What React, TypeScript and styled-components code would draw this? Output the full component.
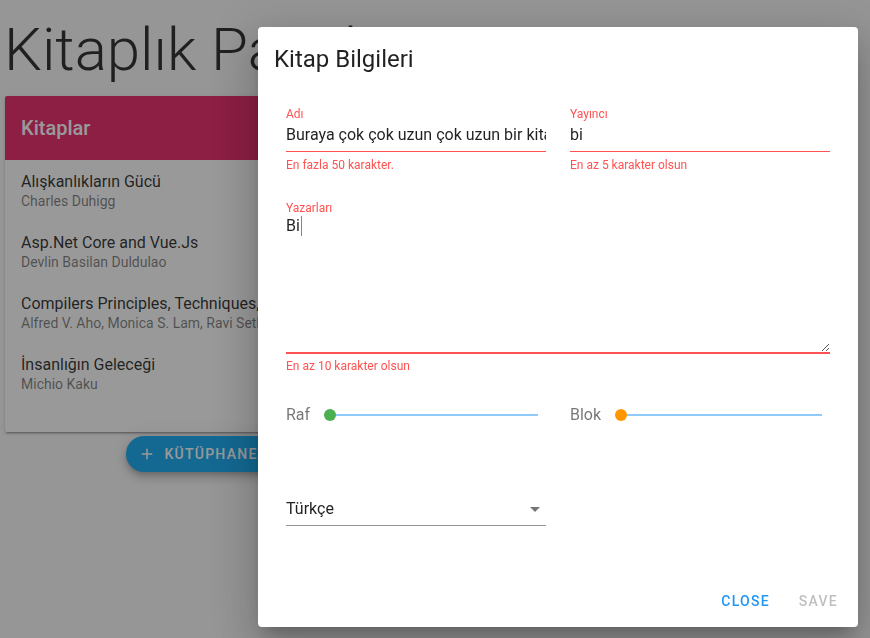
import React from "react";
import styled, { createGlobalStyle } from "styled-components";

const Global = createGlobalStyle`
  html, body { margin: 0; padding: 0; background: #fafafa; }
  body { font-family: Roboto, "Noto Sans", "Liberation Sans", sans-serif; overflow: hidden; }
  * { box-sizing: border-box; }
`;

const ERR = "#ff5252";

const Page = styled.div`
  width: 870px;
  height: 638px;
  padding: 20px 0 0 5px;
  background: #fafafa;
`;

const PageTitle = styled.h1`
  margin: 0 0 16px -1px;
  font-size: 60px;
  font-weight: 300;
  line-height: 60px;
  color: rgba(0, 0, 0, 0.87);
  white-space: nowrap;
`;

const Column = styled.div`
  width: 432px;
  display: flex;
  flex-direction: column;
`;

const Card = styled.div`
  background: #fff;
  border-radius: 2px;
  overflow: hidden;
  box-shadow: 0 3px 1px -2px rgba(0,0,0,.2), 0 2px 2px 0 rgba(0,0,0,.14), 0 1px 5px 0 rgba(0,0,0,.12);
`;

const CardHeader = styled.div`
  height: 64px;
  padding: 0 16px;
  display: flex;
  align-items: center;
  background: #e91e63;
  color: #fff;
  font-size: 20px;
  font-weight: 500;
`;

const List = styled.div`
  padding: 0 0 28px;
`;

const Item = styled.div`
  height: 61px;
  padding: 0 16px;
  display: flex;
  flex-direction: column;
  justify-content: center;
  white-space: nowrap;
`;

const ItemTitle = styled.div`
  font-size: 16px;
  line-height: 20px;
  color: rgba(0, 0, 0, 0.87);
`;

const ItemSub = styled.div`
  font-size: 14px;
  line-height: 18px;
  color: rgba(0, 0, 0, 0.54);
`;

const ButtonRow = styled.div`
  display: flex;
  justify-content: center;
  margin-top: 4px;
`;

const PillButton = styled.button`
  height: 36px;
  border-radius: 18px;
  border: 0;
  padding: 0 16px 0 12px;
  display: flex;
  align-items: center;
  gap: 8px;
  background: #0aa6f2;
  color: #fff;
  font-family: inherit;
  font-size: 14px;
  font-weight: 500;
  letter-spacing: 1.25px;
  text-transform: uppercase;
  box-shadow: 0 3px 5px -1px rgba(0,0,0,.2), 0 6px 10px 0 rgba(0,0,0,.14), 0 1px 18px 0 rgba(0,0,0,.12);
`;

const Overlay = styled.div`
  position: fixed;
  inset: 0;
  background: rgba(33, 33, 33, 0.46);
`;

const DialogLayer = styled.div`
  position: fixed;
  inset: 0;
  display: flex;
  align-items: flex-start;
  padding: 27px 0 0 258px;
`;

const Dialog = styled.div`
  width: 600px;
  height: 600px;
  background: #fff;
  border-radius: 4px;
  display: flex;
  flex-direction: column;
  box-shadow: 0 11px 15px -7px rgba(0,0,0,.2), 0 24px 38px 3px rgba(0,0,0,.14), 0 9px 46px 8px rgba(0,0,0,.12);
`;

const DialogTitle = styled.div`
  padding: 16px;
  font-size: 24px;
  font-weight: 400;
  line-height: 32px;
  color: rgba(0, 0, 0, 0.87);
`;

const DialogBody = styled.div`
  flex: 1;
  padding: 15px 28px 0;
  display: grid;
  grid-template-columns: 260px 260px;
  column-gap: 24px;
  align-content: start;
`;

const Field = styled.div<{ $full?: boolean; $mt?: number }>`
  grid-column: ${(p) => (p.$full ? "1 / -1" : "auto")};
  margin-top: ${(p) => p.$mt ?? 0}px;
  min-width: 0;
`;

const Label = styled.div<{ $error?: boolean }>`
  font-size: 12px;
  line-height: 16px;
  color: ${(p) => (p.$error ? ERR : "rgba(0,0,0,.54)")};
`;

const InputBox = styled.div<{ $error?: boolean }>`
  padding: 3px 0 6px;
  border-bottom: 1px solid ${(p) => (p.$error ? ERR : "rgba(0,0,0,.42)")};
`;

const Input = styled.input`
  display: block;
  width: 100%;
  height: 20px;
  border: 0;
  padding: 0;
  margin: 0;
  outline: none;
  background: transparent;
  font-family: inherit;
  font-size: 16px;
  line-height: 20px;
  color: rgba(0, 0, 0, 0.87);
`;

const Message = styled.div<{ $mt: number }>`
  margin-top: ${(p) => p.$mt}px;
  font-size: 12px;
  line-height: 12px;
  color: ${ERR};
`;

const AreaBox = styled.div`
  position: relative;
  height: 138px;
  border-bottom: 2px solid ${ERR};
  font-size: 16px;
  line-height: 20px;
  color: rgba(0, 0, 0, 0.87);
`;

const Caret = styled.span`
  display: inline-block;
  width: 1px;
  height: 20px;
  margin-left: 1px;
  vertical-align: top;
  background: ${ERR};
`;

const Grip = styled.svg`
  position: absolute;
  right: 1px;
  bottom: 1px;
`;

const SliderRow = styled.div`
  grid-column: 1 / -1;
  margin-top: 27px;
  height: 32px;
  display: grid;
  grid-template-columns: 260px 260px;
  column-gap: 24px;
  align-items: center;
`;

const Slider = styled.div`
  display: flex;
  align-items: center;
`;

const SliderLabel = styled.span`
  font-size: 16px;
  line-height: 20px;
  color: rgba(0, 0, 0, 0.54);
`;

const Track = styled.div`
  position: relative;
  flex: 1;
  height: 12px;
  margin: 0 8px 0 14px;
  &::before {
    content: "";
    position: absolute;
    left: 6px;
    right: 0;
    top: 5px;
    height: 2px;
    background: #90caf9;
  }
`;

const Thumb = styled.span<{ $color: string }>`
  position: absolute;
  left: 0;
  top: 0;
  width: 12px;
  height: 12px;
  border-radius: 50%;
  background: ${(p) => p.$color};
`;

const SelectWrap = styled.div`
  grid-column: 1;
  margin-top: 68px;
`;

const SelectLine = styled.div`
  height: 20px;
  display: flex;
  align-items: center;
  justify-content: space-between;
  font-size: 16px;
  line-height: 20px;
  color: rgba(0, 0, 0, 0.87);
  & > svg { margin-right: -1px; }
`;

const SelectUnder = styled.div`
  margin-top: 6px;
  height: 1px;
  background: rgba(0, 0, 0, 0.42);
`;

const Actions = styled.div`
  display: flex;
  justify-content: flex-end;
  gap: 13px;
  padding: 8px 12px 8px;
`;

const TextButton = styled.button<{ $disabled?: boolean }>`
  height: 36px;
  border: 0;
  background: transparent;
  padding: 0 8px;
  font-family: inherit;
  font-size: 14px;
  font-weight: 500;
  letter-spacing: 1.25px;
  text-transform: uppercase;
  color: ${(p) => (p.$disabled ? "rgba(0,0,0,.26)" : "#2196f3")};
`;

const books = [
  { t: "Alışkanlıkların Gücü", a: "Charles Duhigg" },
  { t: "Asp.Net Core and Vue.Js", a: "Devlin Basilan Duldulao" },
  { t: "Compilers Principles, Techniques, and Tools", a: "Alfred V. Aho, Monica S. Lam, Ravi Sethi" },
  { t: "İnsanlığın Geleceği", a: "Michio Kaku" },
];

export default function App() {
  return (
    <>
      <Global />
      <Page>
        <PageTitle>Kitaplık Paneli</PageTitle>
        <Column>
          <Card>
            <CardHeader>Kitaplar</CardHeader>
            <List>
              {books.map((b) => (
                <Item key={b.t}>
                  <ItemTitle>{b.t}</ItemTitle>
                  <ItemSub>{b.a}</ItemSub>
                </Item>
              ))}
            </List>
          </Card>
          <ButtonRow>
            <PillButton>
              <svg width="18" height="18" viewBox="0 0 24 24">
                <path d="M19 13h-6v6h-2v-6H5v-2h6V5h2v6h6v2z" fill="currentColor" />
              </svg>
              Kütüphane Ekle
            </PillButton>
          </ButtonRow>
        </Column>
      </Page>
      <Overlay />
      <DialogLayer>
        <Dialog>
          <DialogTitle>Kitap Bilgileri</DialogTitle>
          <DialogBody>
            <Field>
              <Label $error>Adı</Label>
              <InputBox $error>
                <Input readOnly value="Buraya çok çok uzun çok uzun bir kitap adı yazıyorum" />
              </InputBox>
              <Message $mt={7}>En fazla 50 karakter.</Message>
            </Field>
            <Field>
              <Label $error>Yayıncı</Label>
              <InputBox $error>
                <Input readOnly value="bi" />
              </InputBox>
              <Message $mt={7}>En az 5 karakter olsun</Message>
            </Field>
            <Field $full $mt={29}>
              <Label $error>Yazarları</Label>
              <AreaBox>
                Bi<Caret />
                <Grip width="7" height="7" viewBox="0 0 7 7">
                  <path d="M7 0 L0 7 M7 4 L4 7" stroke="#555" strokeWidth="1" />
                </Grip>
              </AreaBox>
              <Message $mt={6}>En az 10 karakter olsun</Message>
            </Field>
            <SliderRow>
              <Slider>
                <SliderLabel>Raf</SliderLabel>
                <Track>
                  <Thumb $color="#4caf50" />
                </Track>
              </Slider>
              <Slider>
                <SliderLabel>Blok</SliderLabel>
                <Track>
                  <Thumb $color="#ff9800" />
                </Track>
              </Slider>
            </SliderRow>
            <SelectWrap>
              <SelectLine>
                Türkçe
                <svg width="24" height="24" viewBox="0 0 24 24">
                  <path d="M7 10l5 5 5-5z" fill="rgba(0,0,0,.54)" />
                </svg>
              </SelectLine>
              <SelectUnder />
            </SelectWrap>
          </DialogBody>
          <Actions>
            <TextButton>Close</TextButton>
            <TextButton $disabled>Save</TextButton>
          </Actions>
        </Dialog>
      </DialogLayer>
    </>
  );
}
